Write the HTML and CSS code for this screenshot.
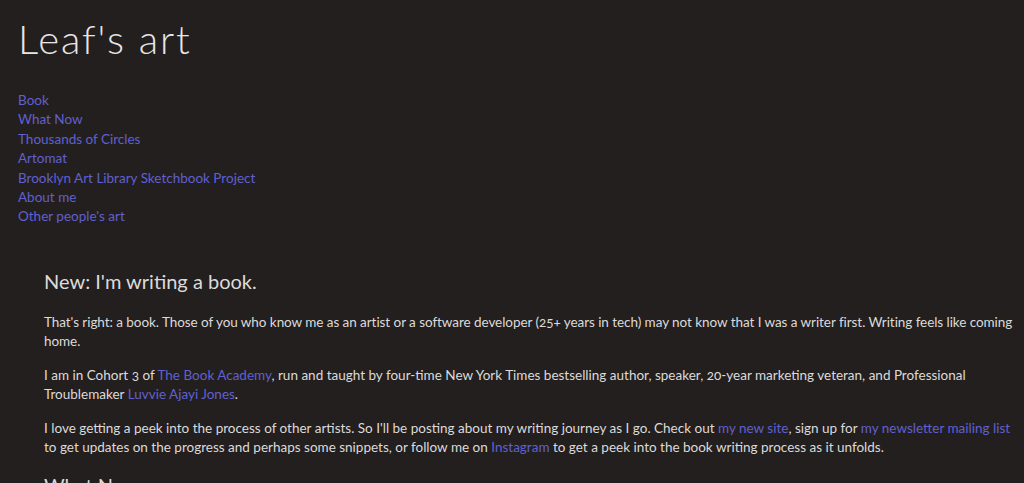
FILE: index.html
```html
<!DOCTYPE html>
<html lang="en">
<head>
<meta charset="utf-8">
<title>Leaf's art</title>
<link rel="stylesheet" href="styles.css">
</head>
<body>
<header class="site-header">
  <h1 class="site-title">Leaf's art</h1>
  <nav class="site-nav">
    <a href="#">Book</a>
    <a href="#">What Now</a>
    <a href="#">Thousands of Circles</a>
    <a href="#">Artomat</a>
    <a href="#">Brooklyn Art Library Sketchbook Project</a>
    <a href="#">About me</a>
    <a href="#">Other people's art</a>
  </nav>
</header>
<main class="content">
  <h2 class="post-title">New: I'm writing a book.</h2>
  <p class="lead">That's right: a book. Those of you who know me as an artist or a software developer (25+ years in tech) may not know that I was a writer first. Writing feels like coming home.</p>
  <p>I am in Cohort 3 of <a href="#">The Book Academy</a>, run and taught by four-time New York Times bestselling author, speaker, 20-year marketing veteran, and Professional Troublemaker <a href="#">Luvvie Ajayi Jones</a>.</p>
  <p>I love getting a peek into the process of other artists. So I'll be posting about my writing journey as I go. Check out <a href="#">my new site</a>, sign up for <a href="#">my newsletter mailing list</a> to get updates on the progress and perhaps some snippets, or follow me on <a href="#">Instagram</a> to get a peek into the book writing process as it unfolds.</p>
  <h2 class="post-title">What Now</h2>
</main>
</body>
</html>
```
FILE: styles.css
```css
html, body {
  margin: 0;
  padding: 0;
}
body {
  background: #231f1f;
  color: #dcdada;
  font-family: "Lato", "Open Sans", sans-serif;
  font-weight: 400;
}
a {
  color: #6060d0;
  text-decoration: none;
}
.site-header {
  padding: 13px 18px 0 18px;
}
.site-title {
  margin: 0;
  font-size: 40px;
  font-weight: 300;
  letter-spacing: 1.9px;
  line-height: 52px;
  color: #e8e6e6;
}
.site-nav {
  display: flex;
  flex-direction: column;
  align-items: flex-start;
  margin-top: 26px;
  font-size: 13.5px;
  line-height: 19.4px;
}
.content {
  padding: 41px 4px 0 44px;
  font-size: 13.5px;
  line-height: 19px;
  font-variant-numeric: oldstyle-nums;
}
.post-title {
  margin: 0 0 19px 0;
  font-size: 20px;
  font-weight: 400;
  line-height: 26px;
}
.content p {
  margin: 0 0 15px 0;
}
.content .lead {
  letter-spacing: -0.06px;
}
```
